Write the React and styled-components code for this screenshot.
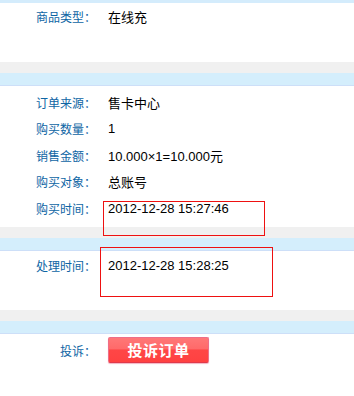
import styled, { createGlobalStyle } from "styled-components";

const GlobalStyle = createGlobalStyle`
  body {
    margin: 0;
    background: #fff;
    font-family: "Liberation Sans", "Noto Sans CJK SC", sans-serif;
  }
`;

const Page = styled.div`
  position: relative;
  width: 354px;
  height: 396px;
  overflow: hidden;
`;

const TopEdge = styled.div`
  height: 3px;
  background: #d4ecfc;
`;

const Divider = styled.div`
  height: 11px;
  background: #f0f0f0;
  border-bottom: 13px solid #d4eefc;
  position: relative;
  &::after {
    content: "";
    position: absolute;
    left: 0;
    right: 0;
    bottom: -13px;
    height: 1px;
    background: #cddff8;
  }
`;

const Section = styled.div`
  height: ${(p) => p.h}px;
  padding-top: ${(p) => p.pt || 0}px;
  box-sizing: border-box;
`;

const Row = styled.div`
  display: flex;
  align-items: center;
  height: ${(p) => p.rh || 26}px;
`;

const Label = styled.div`
  width: 96px;
  text-align: right;
  font-size: 12px;
  color: #0e65a4;
  white-space: nowrap;
`;

const Value = styled.div`
  margin-left: 12px;
  font-size: 13px;
  color: #000;
  white-space: nowrap;
`;

const ComplainButton = styled.button`
  margin-left: 12px;
  width: 101px;
  height: 26px;
  padding: 0;
  border: 1px solid #ee6e88;
  border-bottom-color: #e03a4a;
  border-radius: 2px;
  background: linear-gradient(to bottom, #ff7777 0%, #ff6a6a 45%, #ff4646 50%, #ff4141 100%);
  box-shadow: 0 1px 1px #f3b4c4;
  color: #fff;
  font-family: "Noto Sans CJK SC", sans-serif;
  font-size: 15px;
  font-weight: bold;
  letter-spacing: 0.5px;
  line-height: 22px;
`;

const Mark = styled.div`
  position: absolute;
  border: 1.5px solid #ee1111;
  box-sizing: border-box;
`;

export default function App() {
  return (
    <Page>
      <GlobalStyle />
      <TopEdge />
      <Section h={59}>
        <Row>
          <Label>商品类型：</Label>
          <Value>在线充</Value>
        </Row>
      </Section>
      <Divider />
      <Section h={141} pt={3}>
        <Row rh={26.5}>
          <Label>订单来源：</Label>
          <Value>售卡中心</Value>
        </Row>
        <Row rh={26.5}>
          <Label>购买数量：</Label>
          <Value>1</Value>
        </Row>
        <Row rh={26.5}>
          <Label>销售金额：</Label>
          <Value>10.000×1=10.000元</Value>
        </Row>
        <Row rh={26.5}>
          <Label>购买对象：</Label>
          <Value>总账号</Value>
        </Row>
        <Row rh={26.5}>
          <Label>购买时间：</Label>
          <Value>2012-12-28 15:27:46</Value>
        </Row>
      </Section>
      <Divider />
      <Section h={59} pt={1}>
        <Row>
          <Label>处理时间：</Label>
          <Value>2012-12-28 15:28:25</Value>
        </Row>
      </Section>
      <Divider />
      <Section h={62} pt={3}>
        <Row>
          <Label>投诉：</Label>
          <ComplainButton>投诉订单</ComplainButton>
        </Row>
      </Section>
      <Mark style={{ left: 103, top: 201, width: 162, height: 35 }} />
      <Mark style={{ left: 100, top: 247, width: 173, height: 50 }} />
    </Page>
  );
}
